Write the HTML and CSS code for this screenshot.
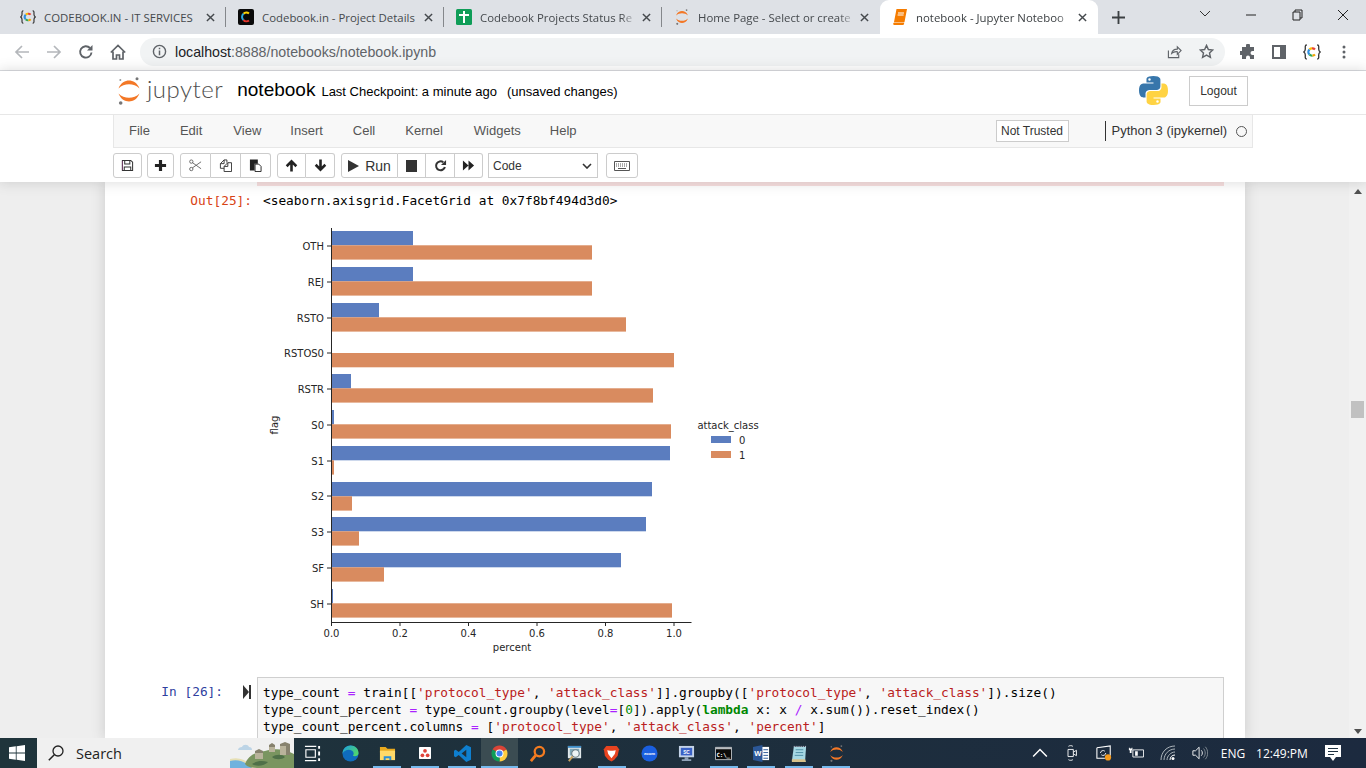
FILE: index.html
```html
<!DOCTYPE html>
<html lang="en">
<head>
<meta charset="utf-8">
<title>notebook - Jupyter Notebook</title>
<link rel="stylesheet" href="styles.css">
</head>
<body>
<svg class="defs" width="0" height="0" aria-hidden="true">
  <defs>
    <linearGradient id="edgeTop" x1="0" y1="0" x2="1" y2="0.600"><stop offset="0" stop-color="#1b9de2"/><stop offset="1" stop-color="#4fd66e"/></linearGradient>
  </defs>
  <symbol id="jlogo" viewBox="0 0 22 28">
    <path fill="#f37726" d="M0.5 11.5C3 5.5 7 3.6 11 3.6s8 1.900 10.500 7.900C18.500 8.500 15 7.300 11 7.300S3.500 8.500 0.500 11.500z"/>
    <path fill="#f37726" d="M0.500 16.500C3 22.500 7 24.400 11 24.400s8-1.900 10.500-7.900C18.500 19.500 15 20.700 11 20.700S3.500 19.500 0.500 16.500z"/>
    <circle cx="19" cy="1.800" r="1.500" fill="#767677"/>
    <circle cx="2.700" cy="26" r="1.800" fill="#767677"/>
    <circle cx="2.300" cy="3" r="1" fill="#9a9a9a"/>
  </symbol>
  <symbol id="cbrace" viewBox="0 0 18 16">
    <path fill="none" stroke="#333" stroke-width="1.300" d="M3.800 1C1.800 1 2.300 3 2.300 5S2.300 7 .8 8c1.500 1 1.500 1 1.500 3s-.5 4 1.500 4M14.200 1c2 0 1.500 2 1.500 4s0 2 1.500 3c-1.500 1-1.500 1-1.500 3s.5 4-1.500 4"/>
    <path fill="none" stroke="#ea4335" stroke-width="2.200" d="M12 5.400A3.700 3.700 0 0 0 9 4.300"/>
    <path fill="none" stroke="#fbbc05" stroke-width="2.200" d="M9 4.300A3.700 3.700 0 0 0 6.400 5.400"/>
    <path fill="none" stroke="#2f8fe0" stroke-width="2.200" d="M6.400 5.400A3.700 3.700 0 0 0 6.400 10.600"/>
    <path fill="none" stroke="#34a853" stroke-width="2.200" d="M6.400 10.600A3.700 3.700 0 0 0 9.500 11.700"/>
    <path fill="none" stroke="#f4a300" stroke-width="2.200" d="M9.500 11.700A3.700 3.700 0 0 0 12 10.600"/>
  </symbol>
  <symbol id="xmark" viewBox="0 0 10 10">
    <path stroke="#45494d" stroke-width="1.600" d="M1 1l8 8M9 1l-8 8"/>
  </symbol>
</svg>

<div class="window">
  <div class="tabstrip">
    <div class="tab tab-full">
      <svg class="fav" viewBox="0 0 18 16"><use href="#cbrace"/></svg>
      <span class="tab-title">CODEBOOK.IN - IT SERVICES</span>
      <svg class="tab-x" viewBox="0 0 10 10"><use href="#xmark"/></svg>
    </div>
    <div class="tab tab-full">
      <svg class="fav" viewBox="0 0 16 16"><rect width="16" height="16" rx="2" fill="#0a0a0a"/><path fill="none" stroke="#ffd400" stroke-width="2" d="M11 4.500A4 4 0 0 0 5.500 4.800"/><path fill="none" stroke="#29a8e0" stroke-width="2" d="M5.500 4.800A4 4 0 0 0 5.500 11"/><path fill="none" stroke="#e5352d" stroke-width="2" d="M5.500 11A4 4 0 0 0 11 11.500"/></svg>
      <span class="tab-title">Codebook.in - Project Details</span>
      <svg class="tab-x" viewBox="0 0 10 10"><use href="#xmark"/></svg>
    </div>
    <div class="tab">
      <svg class="fav" viewBox="0 0 16 16"><rect width="16" height="16" rx="1.500" fill="#0f9d58"/><path fill="#fff" d="M7 2h2v3h4v2H9v7H7V7H3V5h4z"/></svg>
      <span class="tab-title">Codebook Projects Status Re</span>
      <svg class="tab-x" viewBox="0 0 10 10"><use href="#xmark"/></svg>
    </div>
    <div class="tab tab-last">
      <svg class="fav" viewBox="0 0 22 28"><use href="#jlogo"/></svg>
      <span class="tab-title">Home Page - Select or create</span>
      <svg class="tab-x" viewBox="0 0 10 10"><use href="#xmark"/></svg>
    </div>
    <div class="tab tab-active">
      <svg class="fav fav-book" viewBox="0 0 14 16"><path fill="#f57c00" d="M3.500 0H14l-2.500 13H1zM1 13.500h10.300l-.3 1.500c-.1.600-.5 1-1.100 1H1.500C.6 16 0 15.200.2 14.400z"/><path stroke="#fff" stroke-width="1" d="M5 4h6M4.600 6h6"/></svg>
      <span class="tab-title">notebook - Jupyter Noteboo</span>
      <svg class="tab-x" viewBox="0 0 10 10"><use href="#xmark"/></svg>
    </div>
    <svg class="newtab" viewBox="0 0 14 14"><path stroke="#3c4043" stroke-width="2" d="M7 0v14M0 7h14"/></svg>
    <div class="winctl">
      <svg class="wc" viewBox="0 0 46 30"><path fill="none" stroke="#333" d="M18 11l5 5 5-5"/></svg>
      <svg class="wc" viewBox="0 0 46 30"><path stroke="#222" d="M18 15h10"/></svg>
      <svg class="wc" viewBox="0 0 46 30"><path fill="none" stroke="#222" d="M19 12h7v8h-7zM21 12v-2h7v8h-2"/></svg>
      <svg class="wc" viewBox="0 0 46 30"><path stroke="#222" d="M18 10l10 10M28 10L18 20"/></svg>
    </div>
  </div>

  <div class="navbar">
    <svg class="nav-ic" viewBox="0 0 16 16"><path fill="none" stroke="#b4b7bb" stroke-width="1.700" d="M15 8H2M8 2L2 8l6 6"/></svg>
    <svg class="nav-ic" viewBox="0 0 16 16"><path fill="none" stroke="#b4b7bb" stroke-width="1.700" d="M1 8h13M8 2l6 6-6 6"/></svg>
    <svg class="nav-ic" viewBox="0 0 16 16"><path fill="none" stroke="#5f6368" stroke-width="1.900" d="M13.500 8.500A5.700 5.700 0 1 1 12 4"/><path fill="#5f6368" d="M14.500 1v5.500H9z"/></svg>
    <svg class="nav-ic" viewBox="0 0 16 16"><path fill="none" stroke="#5f6368" stroke-width="1.700" d="M3 7.500V15h3.500v-4h3v4H13V7.500M.8 8.500L8 1.500l7.200 7"/></svg>
    <div class="omnibox">
      <svg class="omni-info" viewBox="0 0 16 16"><circle cx="8" cy="8" r="6.500" fill="none" stroke="#5f6368" stroke-width="1.500"/><path stroke="#5f6368" stroke-width="1.600" d="M8 7v5M8 4v1.700"/></svg>
      <span class="url"><span class="url-host">localhost</span>:8888/notebooks/notebook.ipynb</span>
      <svg class="omni-share" viewBox="0 0 16 16"><path fill="none" stroke="#5f6368" stroke-width="1.200" d="M1.500 7v7.500h11V11M5 10c.5-3 3-4.500 6-4.500V3l4 4-4 4V8.200C8.500 8 6.500 8.500 5 10z"/></svg>
      <svg class="omni-star" viewBox="0 0 16 16"><path fill="none" stroke="#5f6368" stroke-width="1.500" d="M8 1.500l2 4.400 4.700.5-3.500 3.200 1 4.700L8 11.900l-4.200 2.400 1-4.700L1.300 6.400 6 5.900z"/></svg>
    </div>
    <svg class="ext ext-puzzle" viewBox="0 0 16 16"><path fill="#5f6368" d="M6 1.500a2 2 0 0 1 4 0V3h4v4h-1.500a2 2 0 0 0 0 4H14v4H10v-1.500a2 2 0 0 0-4 0V15H2v-4H.500a2 2 0 0 1 0-4H2V3h4z"/></svg>
    <svg class="ext ext-panel" viewBox="0 0 16 16"><path fill="#5f6368" d="M1 1h14v14H1zM3 3v10h6V3z"/></svg>
    <svg class="ext ext-c" viewBox="0 0 18 16"><use href="#cbrace"/></svg>
    <svg class="ext ext-dots" viewBox="0 0 16 16"><circle cx="8" cy="3" r="1.500" fill="#5f6368"/><circle cx="8" cy="8" r="1.500" fill="#5f6368"/><circle cx="8" cy="13" r="1.500" fill="#5f6368"/></svg>
  </div>

  <header class="jp-head">
    <div class="jp-title">
      <a class="jp-logo">
        <svg class="jp-mark" viewBox="0 0 22 28"><use href="#jlogo"/></svg>
        <span class="jp-word">jupyter</span>
      </a>
      <span class="nb-name">notebook</span>
      <span class="nb-check">Last Checkpoint: a minute ago</span>
      <span class="nb-save">(unsaved changes)</span>
      <svg class="py-logo" viewBox="0 0 111 111">
        <path fill="#3776ab" d="M54.900 0C26.800 0 28.600 12.200 28.600 12.200v12.600h26.800v3.800H17.900S0 26.600 0 54.800s15.700 27.200 15.700 27.200h9.300V68.900s-.5-15.700 15.400-15.700h26.600s14.900.2 14.900-14.400V14.600S84.200 0 54.900 0zM40.200 8.500a4.800 4.800 0 1 1 0 9.600 4.800 4.800 0 0 1 0-9.600z"/>
        <path fill="#ffd343" transform="rotate(180 55.500 55.500)" d="M54.900 0C26.800 0 28.600 12.200 28.600 12.200v12.600h26.800v3.800H17.900S0 26.600 0 54.800s15.700 27.200 15.700 27.200h9.300V68.900s-.5-15.700 15.400-15.700h26.600s14.900.2 14.900-14.400V14.600S84.200 0 54.900 0zM40.200 8.500a4.800 4.800 0 1 1 0 9.600 4.800 4.800 0 0 1 0-9.600z"/>
      </svg>
      <button class="logout">Logout</button>
    </div>
    <nav class="menubar">
      <span class="mi mi-file">File</span>
      <span class="mi mi-edit">Edit</span>
      <span class="mi mi-view">View</span>
      <span class="mi mi-insert">Insert</span>
      <span class="mi mi-cell">Cell</span>
      <span class="mi mi-kernel">Kernel</span>
      <span class="mi mi-widgets">Widgets</span>
      <span class="mi mi-help">Help</span>
      <span class="trust">Not Trusted</span>
      <span class="kernel">Python 3 (ipykernel)</span>
      <span class="kernel-dot"></span>
    </nav>
    <div class="nb-toolbar">
      <div class="btn-group g-save"><button class="tb"><svg viewBox="0 0 14 14"><path fill="none" stroke="#333" stroke-width="1.100" d="M1.500 1.500h9l2 2v9h-11zM4 1.500v4h5.500v-4M3.500 12.500V8.500h7v4"/><path stroke="#8a3a7a" stroke-width=".7" d="M1.500 2v10"/></svg></button></div>
      <div class="btn-group g-add"><button class="tb"><svg viewBox="0 0 14 14"><path fill="#222" d="M5.300 1h3.400v4.300H13v3.400H8.700V13H5.300V8.700H1V5.300h4.300z"/></svg></button></div>
      <div class="btn-group g-edit">
        <button class="tb"><svg viewBox="0 0 14 14"><path fill="none" stroke="#666" stroke-width="1" d="M3.500 3.800L13 10.500M3.500 9.700L13 3"/><circle cx="2.500" cy="2.800" r="1.800" fill="none" stroke="#666"/><circle cx="2.500" cy="10.800" r="1.800" fill="none" stroke="#666"/></svg></button>
        <button class="tb"><svg viewBox="0 0 14 14"><path fill="none" stroke="#333" stroke-width="1" d="M5.500 1l-4 4v5h4M5.500 1v4h-4M5.500 1h3v3M9.500 4l-4 4v5.500h8V4zM9.500 4v4h-4"/></svg></button>
        <button class="tb"><svg viewBox="0 0 14 14"><path fill="#222" d="M1 .5h8.500V5H6v7.500H1z"/><path fill="#fff" stroke="#222" d="M6.500 5.500h4l2.500 2.500v5.500H6.500z"/></svg></button>
      </div>
      <div class="btn-group g-move">
        <button class="tb"><svg viewBox="0 0 14 14"><path fill="none" stroke="#222" stroke-width="2.800" d="M7 13.500V3M1.800 7.800L7 2.600l5.200 5.200"/></svg></button>
        <button class="tb"><svg viewBox="0 0 14 14"><path fill="none" stroke="#222" stroke-width="2.800" d="M7 .5V11M1.800 6.200L7 11.400l5.200-5.200"/></svg></button>
      </div>
      <div class="btn-group g-run">
        <button class="tb tb-run"><svg viewBox="0 0 11 12"><path fill="#333" d="M0 0l11 6-11 6z"/></svg><span>Run</span></button>
        <button class="tb tb-stop"><svg viewBox="0 0 11 12"><path fill="#333" d="M0 0h11v12H0z"/></svg></button>
        <button class="tb tb-re"><svg viewBox="0 0 14 14"><path fill="none" stroke="#333" stroke-width="2.200" d="M11.700 8.500A4.800 4.800 0 1 1 10 3.500"/><path fill="#333" d="M13 1v5.500H7.500z"/></svg></button>
        <button class="tb tb-ff"><svg viewBox="0 0 14 14"><path fill="#222" d="M1 1.500l6 5.500-6 5.500zM7 1.500l6 5.500-6 5.500z"/></svg></button>
      </div>
      <div class="cell-type"><span>Code</span><svg viewBox="0 0 10 6"><path fill="none" stroke="#333" stroke-width="1.600" d="M1 1l4 4 4-4"/></svg></div>
      <button class="tb tb-kb"><svg viewBox="0 0 16 10"><path fill="none" stroke="#555" d="M.5.500h15v9H.5z"/><path stroke="#555" stroke-dasharray="1 1" d="M2 3h12M2 5h12"/><path stroke="#555" d="M4 7.500h8"/></svg></button>
    </div>
  </header>

  <main class="site">
    <div class="nb-scroll">
      <div class="nb-container">
        <div class="stderr-tail"></div>
        <div class="out-row">
          <div class="prompt prompt-out">Out[25]:</div>
          <pre class="out-text">&lt;seaborn.axisgrid.FacetGrid at 0x7f8bf494d3d0&gt;</pre>
        </div>
        <svg class="chart" viewBox="0 0 560 449" width="560" height="449">
          <g class="blue">
            <rect x="74" y="15" width="82" height="14.300"/>
            <rect x="74" y="51" width="82" height="14.300"/>
            <rect x="74" y="87" width="48" height="14.300"/>
            <rect x="74" y="158" width="20" height="14.300"/>
            <rect x="74" y="194" width="3" height="14.300"/>
            <rect x="74" y="230" width="339" height="14.300"/>
            <rect x="74" y="266" width="321" height="14.300"/>
            <rect x="74" y="301" width="315" height="14.300"/>
            <rect x="74" y="337" width="290" height="14.300"/>
            <rect x="74" y="373" width="2" height="14.300"/>
          </g>
          <g class="orange">
            <rect x="74" y="29.300" width="261" height="14.300"/>
            <rect x="74" y="65.300" width="261" height="14.300"/>
            <rect x="74" y="101.300" width="295" height="14.300"/>
            <rect x="74" y="137" width="343" height="14.300"/>
            <rect x="74" y="172.300" width="322" height="14.300"/>
            <rect x="74" y="208.300" width="340" height="14.300"/>
            <rect x="74" y="244.300" width="3" height="14.300"/>
            <rect x="74" y="280.300" width="21" height="14.300"/>
            <rect x="74" y="315.300" width="28" height="14.300"/>
            <rect x="74" y="351.300" width="53" height="14.300"/>
            <rect x="74" y="387.300" width="341" height="14.300"/>
          </g>
          <path class="axis" d="M74.500 12v394.500H434.500"/>
          <path class="axis" d="M70 30h4M70 66h4M70 102h4M70 137h4M70 173h4M70 209h4M70 245h4M70 280h4M70 316h4M70 352h4M70 388h4"/>
          <path class="axis" d="M74.500 406v4M143 406v4M211.500 406v4M280 406v4M348.500 406v4M417 406v4"/>
          <g class="ylabels">
            <text x="67" y="33.500">OTH</text>
            <text x="67" y="69.500">REJ</text>
            <text x="67" y="105.500">RSTO</text>
            <text x="67" y="140.500">RSTOS0</text>
            <text x="67" y="176.500">RSTR</text>
            <text x="67" y="212.500">S0</text>
            <text x="67" y="248.500">S1</text>
            <text x="67" y="283.500">S2</text>
            <text x="67" y="319.500">S3</text>
            <text x="67" y="355.500">SF</text>
            <text x="67" y="391.500">SH</text>
          </g>
          <g class="xlabels">
            <text x="74.500" y="421">0.0</text>
            <text x="143" y="421">0.2</text>
            <text x="211.500" y="421">0.4</text>
            <text x="280" y="421">0.6</text>
            <text x="348.500" y="421">0.8</text>
            <text x="417" y="421">1.0</text>
            <text x="255" y="435">percent</text>
            <text x="471" y="213">attack_class</text>
          </g>
          <text class="flag" transform="translate(20.500 209) rotate(-90)">flag</text>
          <rect class="blue" x="454" y="220" width="20" height="7"/>
          <rect class="orange" x="454" y="235" width="20" height="7"/>
          <text class="legend-n" x="482" y="228">0</text>
          <text class="legend-n" x="482" y="243">1</text>
        </svg>
        <div class="in-row">
          <div class="prompt prompt-in">In [26]:</div>
          <svg class="marker" viewBox="0 0 8 14"><path fill="#333" d="M0 0l6 7-6 7z"/><path fill="#333" d="M6 0h2v14H6z"/></svg>
          <pre class="code"><span>type_count <i class="op">=</i> train[[<i class="st">'protocol_type'</i>, <i class="st">'attack_class'</i>]].groupby([<i class="st">'protocol_type'</i>, <i class="st">'attack_class'</i>]).size()</span>
<span>type_count_percent <i class="op">=</i> type_count.groupby(level<i class="op">=</i>[<i class="nu">0</i>]).apply(<b class="kw">lambda</b> x: x <i class="op">/</i> x.sum()).reset_index()</span>
<span>type_count_percent.columns <i class="op">=</i> [<i class="st">'protocol_type'</i>, <i class="st">'attack_class'</i>, <i class="st">'percent'</i>]</span></pre>
        </div>
      </div>
    </div>
    <div class="scrollbar">
      <svg class="sb-arrow" viewBox="0 0 8 5"><path fill="#505050" d="M4 0l4 5H0z"/></svg>
      <div class="sb-thumb"></div>
      <svg class="sb-arrow" viewBox="0 0 8 5"><path fill="#505050" d="M4 5l4-5H0z"/></svg>
    </div>
  </main>

  <footer class="taskbar">
    <div class="start"><svg viewBox="0 0 16 16"><path fill="#fff" d="M0 2.300l6.800-1V7.600H0zM7.600 1.200L16 0v7.600H7.600zM0 8.400h6.800v6.300L0 13.700zM7.600 8.400H16V16l-8.400-1.200z"/></svg></div>
    <div class="searchbox">
      <svg class="search-ic" viewBox="0 0 16 16"><circle cx="10" cy="6" r="5" fill="none" stroke="#222" stroke-width="1.300"/><path stroke="#222" stroke-width="1.500" d="M6.300 9.700L.8 15.200"/></svg>
      <span class="search-text">Search</span>
      <svg class="search-art" viewBox="0 0 64 30">
        <path fill="#bcd4e6" d="M8 12c0-2 2-3 4-3 1-3 6-3 7 0 2 0 3 1 3 3z"/>
        <path fill="#e6dfb4" d="M0 21c8-2 14 0 20 5l5 4H0z"/>
        <path fill="#6fb2de" d="M0 23c7-2 12 0 17 3l5 4H0z"/>
        <path fill="#7a9560" d="M15 26c3-8 10-12 20-13 10-3 20-2 29 3v14H30c-6 0-12 0-15-4z"/>
        <path fill="#4f7048" d="M22 26c4-3 10-4 16-2-3 4-12 5-16 2zM42 19c4-3 10-3 13 0-3 3-10 3-13 0z"/>
        <path fill="#b9b39b" d="M25 13h8v8h-8zM39 7h6v7h-6zM50 6h10v11H50z"/>
        <path fill="#87826e" d="M25 13l4-2 4 2v2h-8zM39 7l3-2 3 2v2h-6zM50 6l5-2 5 2v2H50zM56 8h4v9h-4z"/>
      </svg>
    </div>
    <div class="tasks">
      <div class="task"><svg viewBox="0 0 18 18"><path fill="none" stroke="#fff" stroke-width="1.200" d="M2 5h10v8H2zM1 1.500h12M1 16.500h12"/><path fill="#fff" d="M15 1h2v3h-2zM15 7h2v4h-2zM15 14h2v3h-2z"/></svg></div>
      <div class="task"><svg viewBox="0 0 18 18"><circle cx="9" cy="9" r="8.500" fill="#0f6cbd"/><path fill="url(#edgeTop)" d="M.5 9C.8 3.500 5 .5 9 .5c5 0 8.500 3.500 8.500 8 0 3-3.500 4-6 3 1.500-1.500 1-4-.8-5.300C7.500 4 3 5 .5 9z"/></svg></div>
      <div class="task task-on"><svg viewBox="0 0 18 18"><path fill="#e8a91e" d="M1 2h6l2 2h8v4H1z"/><path fill="#ffd968" d="M1 6h16v10H1z"/><path fill="#2a8fd6" d="M5 12h8v4h-2v-2H7v2H5z"/></svg></div>
      <div class="task task-on"><svg class="ic-small" viewBox="0 0 16 16"><rect width="16" height="16" rx="1" fill="#fff"/><circle cx="8" cy="5" r="2.500" fill="#e0453c"/><circle cx="4.500" cy="11" r="2.500" fill="#e0453c"/><circle cx="11.500" cy="11" r="2.500" fill="#e0453c"/></svg></div>
      <div class="task task-on"><svg viewBox="0 0 18 18"><path fill="#0e7fcf" d="M13 0l5 2.500v13L13 18 5 10.500 1.800 13 0 12V6l1.800-1L5 7.500zM13 5L8 9l5 4z"/></svg></div>
      <div class="task task-active"><svg viewBox="0 0 18 18"><path fill="#db4437" d="M9 9L1.640 4.750A8.500 8.500 0 0 1 16.360 4.750z"/><path fill="#ffcd40" d="M9 9L16.360 4.750A8.500 8.500 0 0 1 9 17.500z"/><path fill="#0f9d58" d="M9 9V17.500A8.500 8.500 0 0 1 1.640 4.750z"/><circle cx="9" cy="9" r="4.200" fill="#fff"/><circle cx="9" cy="9" r="3.200" fill="#4285f4"/></svg></div>
      <div class="task"><svg viewBox="0 0 18 18"><circle cx="11" cy="7" r="5" fill="none" stroke="#f47b20" stroke-width="2.400"/><path stroke="#f47b20" stroke-width="3" d="M7 11l-5 6"/></svg></div>
      <div class="task"><svg viewBox="0 0 18 18"><path fill="#dfe7ea" d="M2 1h14v13H2z"/><path fill="#3f8fc9" d="M2 1h14v2H2z"/><path fill="#7fa8b8" d="M4 4h10v7H4z"/><circle cx="10" cy="9" r="4" fill="#eef4f6" stroke="#6d7f88" stroke-width="1.200"/><path stroke="#c9a25e" stroke-width="2" d="M7 12l-4 5"/></svg></div>
      <div class="task task-on"><svg viewBox="0 0 18 18"><path fill="#e8431f" d="M3.500 1h11l1.500 2 1 1.500-1.500 7-3.500 4L9 17.500 5.500 15.500 2 11.500.9 4.500 2 3z"/><path fill="#fff" d="M4.500 5.500l3 .5h3l3-.5-1 4L9 14 5.500 9.500zM8 7h2l-1 2z"/></svg></div>
      <div class="task"><svg viewBox="0 0 18 18"><circle cx="9" cy="9" r="8.500" fill="#1a5fe0"/><text class="zoom-txt" x="9" y="10.500">zoom</text></svg></div>
      <div class="task"><svg viewBox="0 0 18 18"><path fill="#c4d3e8" d="M1 1h16v12H1z"/><path fill="#3a62c6" d="M3 3h12v8H3z"/><path fill="#8fa2b8" d="M7 13h4v2H7zM4 15h10v2H4z"/><text class="sc-txt" x="9" y="9">SC</text></svg></div>
      <div class="task task-on"><svg viewBox="0 0 18 18"><path fill="#0a0a0a" stroke="#b8bcc0" d="M.5 2.500h17v13H.5z"/><path fill="#b8bcc0" d="M.5 2.500h17v2H.5z"/><text class="cmd-txt" x="1.500" y="12.500">C:\_</text></svg></div>
      <div class="task task-on"><svg viewBox="0 0 18 18"><path fill="#fff" d="M8 2h9v14H8z"/><path stroke="#2b5797" d="M11 5h5M11 8h5M11 11h5M11 14h5"/><path fill="#2b5797" d="M0 2l10-2v18L0 16z"/><text class="word-txt" x="5" y="12">W</text></svg></div>
      <div class="task task-on"><svg viewBox="0 0 18 18"><path fill="#a6d8e4" d="M4 2h13l-1 15H2z"/><path fill="#d8c28a" d="M2 15h14l1 3H2z"/><path stroke="#4f8fa6" d="M6 5h8M6 8h8M5 11h9"/><path stroke="#dde" stroke-dasharray="1 1" d="M4 1.500h13"/></svg></div>
      <div class="task task-on"><svg viewBox="0 0 22 28"><use href="#jlogo"/></svg></div>
    </div>
    <div class="tray">
      <div class="tray-i"><svg viewBox="0 0 14 8"><path fill="none" stroke="#fff" stroke-width="1.300" d="M1 7l6-6 6 6"/></svg></div>
      <div class="tray-i"><svg viewBox="0 0 12 18"><path fill="none" stroke="#fff" d="M1.500 5h6v8h-6zM7.500 8L11 6v6l-3.500-2M2 1.500c1-1 4-1 5 0M2 16.500c1 1 4 1 5 0"/></svg></div>
      <div class="tray-i"><svg viewBox="0 0 18 18"><path fill="none" stroke="#fff" stroke-width="1.200" d="M1 3l15-2v11M1 3v12h9"/><path fill="none" stroke="#fff" d="M5 9a3 3 0 0 1 5-2M11 9a3 3 0 0 1-5 2"/><circle cx="13.500" cy="14" r="3.500" fill="#f59a1b"/></svg></div>
      <div class="tray-i"><svg viewBox="0 0 18 14"><path fill="none" stroke="#fff" d="M5.500 3.500h12v8h-12z"/><path fill="#fff" d="M1 1v3h4V1h-1v1H2V1zM2 4h2v3H2zM8 5h3v5H8z"/></svg></div>
      <div class="tray-i"><svg viewBox="0 0 16 16"><path fill="none" stroke="#aeb6bc" d="M1 15C1 7 7 1 15 1M4 15c0-6 5-11 11-11M7 15c0-4 4-8 8-8"/><path fill="none" stroke="#fff" d="M10 15c0-3 2-5 5-5"/><circle cx="13" cy="13.500" r="1.500" fill="#fff"/></svg></div>
      <div class="tray-i"><svg viewBox="0 0 18 16"><path fill="none" stroke="#fff" d="M1 5.500h3l4-4v13l-4-4H1z"/><path fill="none" stroke="#fff" d="M10.500 5c1.500 1.500 1.500 4.500 0 6"/><path fill="none" stroke="#8b949b" d="M13 3c2.500 3 2.500 7 0 10M15 1c3.500 4 3.500 10 0 14"/></svg></div>
      <span class="tray-t tray-eng">ENG</span>
      <span class="tray-t tray-time">12:49:PM</span>
      <div class="tray-i tray-note"><svg viewBox="0 0 16 16"><path fill="#fff" d="M0 0h16v12h-5l-3 4-3-4H0z"/><path stroke="#1f3241" d="M3 3.500h10M3 6.500h10M3 9.500h6"/></svg></div>
    </div>
  </footer>
</div>
</body>
</html>
```
FILE: styles.css
```css
* { box-sizing: border-box; }
html, body { margin: 0; padding: 0; height: 768px; overflow: hidden; background: #fff; }
.defs { position: absolute; }
i { font-style: normal; }

.window { display: flex; flex-direction: column; width: 1366px; height: 768px; font-family: "Liberation Sans", Arial, sans-serif; }

/* tabs */
.tabstrip { display: flex; align-items: stretch; height: 34px; background: #dee1e6; padding-left: 8px; flex: none; }
.tab { position: relative; display: flex; align-items: center; width: 218px; padding: 0 9px 0 12px; font: 11.400px "Open Sans", sans-serif; color: #45494d; }
.tab::after { content: ""; position: absolute; right: 0; top: 7px; height: 20px; width: 1px; background: #84878b; }
.tab-last::after, .tab-active::after { display: none; }
.fav { width: 16px; height: 16px; flex: none; margin-right: 8px; }
.fav-book { width: 14px; margin-left: 1px; margin-right: 9px; }
.tab-title { flex: 1; min-width: 0; overflow: hidden; white-space: nowrap; -webkit-mask-image: linear-gradient(to left, transparent 0, #000 16px); mask-image: linear-gradient(to left, transparent 0, #000 16px); }
.tab-full .tab-title { -webkit-mask-image: none; mask-image: none; }
.tab-x { width: 9px; height: 9px; flex: none; margin-left: 5px; margin-right: 2px; }
.tab-active { background: #fff; border-radius: 9px 9px 0 0; color: #3c4043; }
.newtab { width: 13px; height: 13px; align-self: center; margin-left: 14px; flex: none; }
.winctl { display: flex; margin-left: auto; height: 30px; margin-right: 0; }
.wc { width: 46px; height: 30px; }

/* nav */
.navbar { display: flex; align-items: center; height: 37px; flex: none; background: #fff; border-bottom: 1px solid #dadce0; padding: 0 0 1px 14px; }
.nav-ic { width: 16px; height: 16px; margin-right: 16px; flex: none; }
.omnibox { display: flex; align-items: center; width: 1085px; height: 28px; margin-left: -2px; background: #f1f3f4; border-radius: 14px; padding: 0 11px 0 12px; flex: none; }
.omni-info { width: 15px; height: 15px; margin-right: 8px; flex: none; }
.url { flex: 1; font: 14.200px "Liberation Sans", sans-serif; color: #5f6368; white-space: nowrap; }
.url-host { color: #202124; }
.omni-share { width: 15px; height: 15px; margin-right: 17px; }
.omni-star { width: 15px; height: 15px; }
.ext { height: 16px; width: 16px; flex: none; }
.ext-puzzle { margin-left: 15px; }
.ext-panel { margin-left: 15px; }
.ext-c { margin-left: 15px; width: 20px; }
.ext-dots { margin-left: 14px; }

/* jupyter head */
.jp-head { position: relative; z-index: 3; height: 111px; flex: none; background: #fff; box-shadow: 0 0 12px 1px rgba(87, 87, 87, .2); }
.jp-title { display: flex; align-items: center; height: 44px; padding: 0 118px 4px 118px; border-bottom: 1px solid #e7e7e7; color: #000; }
.jp-logo { display: flex; align-items: center; }
.jp-mark { width: 22px; height: 28px; margin-right: 7px; }
.jp-word { font: 300 24px Lato, sans-serif; color: #4e4e4e; letter-spacing: .5px; position: relative; top: -2px; }
.nb-name { margin-left: 14px; font-size: 19px; position: relative; top: -1px; }
.nb-check { margin-left: 6px; font-size: 13px; position: relative; top: 1px; }
.nb-save { margin-left: 10px; font-size: 13px; position: relative; top: 1px; }
.py-logo { width: 29px; height: 29px; margin-left: auto; }
.logout { width: 59px; height: 30px; margin-left: 21px; padding: 0; background: #fff; border: 1px solid #ccc; font: 12px "Liberation Sans", sans-serif; color: #333; }

.menubar { display: flex; align-items: center; width: 1140px; height: 33px; margin-left: 113px; background: #f8f8f8; border: 1px solid #e7e7e7; border-top: 0; font-size: 13px; color: #555; }
.mi { display: block; margin-bottom: 2px; }
.mi-file { margin-left: 15px; }
.mi-edit { margin-left: 30px; }
.mi-view { margin-left: 31px; }
.mi-insert { margin-left: 29px; }
.mi-cell { margin-left: 30px; }
.mi-kernel { margin-left: 30px; }
.mi-widgets { margin-left: 31px; }
.mi-help { margin-left: 29px; }
.trust { margin-left: 419px; width: 73px; height: 22px; display: flex; align-items: center; justify-content: center; background: #fff; border: 1px solid #ccc; font-size: 12px; color: #333; }
.kernel { margin-left: 36px; padding-left: 6px; border-left: 1px solid #333; line-height: 20px; color: #333; font-size: 13px; }
.kernel-dot { width: 11px; height: 11px; margin-left: 9px; border: 1.500px solid #555; border-radius: 50%; }

.nb-toolbar { display: flex; align-items: center; height: 34px; padding: 5px 0 4px 113px; }
.btn-group { display: flex; height: 25px; }
.tb { display: flex; align-items: center; justify-content: center; padding: 0; height: 25px; width: 29px; background: #fff; border: 1px solid #ccc; border-left-width: 0; border-radius: 0; color: #333; font: 14px "Liberation Sans", sans-serif; }
.tb:first-child { border-left-width: 1px; border-radius: 3px 0 0 3px; }
.tb:last-child { border-radius: 0 3px 3px 0; }
.tb:only-child { border-radius: 3px; }
.tb svg { width: 13px; height: 13px; }
.g-save .tb { width: 29px; }
.g-add { margin-left: 5px; }
.g-add .tb { width: 27px; }
.g-edit { margin-left: 6px; }
.g-edit .tb { width: 30px; }
.g-edit .tb:first-child { width: 31px; }
.g-move { margin-left: 6px; }
.g-move .tb { width: 29px; }
.g-run { margin-left: 6px; }
.tb-run { width: 57px; gap: 6px; }
.tb-run svg, .tb-stop svg { width: 11px; height: 12px; }
.tb-stop { width: 28px; }
.tb-re { width: 29px; }
.tb-ff { width: 28px; }
.cell-type { display: flex; align-items: center; justify-content: space-between; width: 110px; height: 25px; margin-left: 5px; padding: 0 5px 0 4px; background: #fff; border: 1px solid #ccc; font-size: 12px; color: #333; }
.cell-type svg { width: 10px; height: 6px; }
.tb.tb-kb { width: 32px; margin-left: 8px; border-left-width: 1px; border-radius: 3px; }
.tb-kb svg { width: 16px; height: 10px; }

/* notebook */
.site { position: relative; display: flex; flex: 1; min-height: 0; background: #eee; overflow: hidden; }
.nb-scroll { flex: 1; min-width: 0; padding-left: 105px; overflow: hidden; }
.nb-container { width: 1140px; height: 100%; background: #fff; box-shadow: 0 0 12px 1px rgba(87, 87, 87, .2); overflow: hidden; }
.stderr-tail { width: 967px; height: 4px; margin-left: 152px; background: #f7dede; }
.out-row { display: flex; align-items: center; height: 17px; margin-top: 6px; }
.prompt, .out-text, .code { font: 12.800px/17px "DejaVu Sans Mono", monospace; }
.prompt-out { width: 147px; text-align: right; color: #d84315; }
.prompt-in { width: 118px; text-align: right; color: #303f9f; flex: none; padding-top: 6px; }
.out-text { margin: 0 0 0 11px; color: #000; }
.chart { display: block; margin: 7px 0 0 152px; }
.blue { fill: #5b7dbf; }
.orange { fill: #d98b5f; }
.axis { fill: none; stroke: #262626; stroke-width: 1; }
.ylabels text, .xlabels text, .flag, .legend-n { font: 10px "DejaVu Sans", sans-serif; fill: #262626; }
.ylabels text { text-anchor: end; }
.xlabels text { text-anchor: middle; }
.flag { text-anchor: middle; }
.in-row { display: flex; align-items: flex-start; margin-top: 12px; }
.marker { width: 8px; height: 14px; margin: 8px 6px 0 20px; flex: none; }
.code { width: 967px; height: 100px; margin: 0; padding: 6px 5px; background: #f7f7f7; border: 1px solid #cfcfcf; color: #000; flex: none; }
.op { color: #a2f; }
.st { color: #ba2121; }
.nu { color: #080; }
.kw { color: #080; font-weight: 700; }

.scrollbar { display: flex; flex-direction: column; align-items: center; width: 17px; background: #f1f1f1; flex: none; position: relative; z-index: 1; padding: 7px 0 4px; }
.sb-arrow { width: 8px; height: 5px; flex: none; }
.sb-thumb { width: 13px; height: 17px; margin-top: 207px; margin-bottom: auto; background: #c1c1c1; }

/* taskbar */
.taskbar { display: flex; align-items: stretch; height: 30px; flex: none; background: linear-gradient(to right, #1f343b, #1c2a3f); position: relative; z-index: 4; color: #fff; }
.start { display: flex; align-items: center; justify-content: center; width: 37px; flex: none; padding-right: 3px; }
.start svg { width: 16px; height: 16px; }
.searchbox { display: flex; align-items: center; width: 257px; flex: none; padding-left: 11px; background: #f0f0f0; overflow: hidden; }
.search-ic { width: 16px; height: 16px; margin-right: 12px; flex: none; }
.search-text { font: 14.500px "Open Sans", sans-serif; color: #222; }
.search-art { width: 64px; height: 30px; margin-left: auto; flex: none; }
.tasks { display: flex; flex: none; }
.task { position: relative; display: flex; align-items: center; justify-content: center; width: 37.400px; }
.task svg { width: 17px; height: 17px; }
.task svg.ic-small { width: 12px; height: 12px; }
.task-on::after, .task-active::after { content: ""; position: absolute; left: 4.700px; right: 4.700px; bottom: 0; height: 2px; background: #76b9ed; }
.task-active { background: #3b4c52; }
.task-active::after { left: 0; right: 0; }
.zoom-txt { font: 700 4.500px "Liberation Sans", sans-serif; fill: #fff; text-anchor: middle; }
.sc-txt { font: 700 5px "Liberation Sans", sans-serif; fill: #fff; text-anchor: middle; }
.cmd-txt { font: 700 6px "DejaVu Sans Mono", monospace; fill: #fff; }
.word-txt { font: 700 8px "Liberation Sans", sans-serif; fill: #fff; text-anchor: middle; }
.tray { display: flex; align-items: center; margin-left: auto; padding-right: 14px; }
.tray-i { display: flex; align-items: center; justify-content: center; width: 32px; height: 100%; }
.tray-i svg { width: 16px; height: 16px; }
.tray-t { font: 12px "Open Sans", sans-serif; color: #fff; text-align: center; }
.tray-eng { width: 34px; }
.tray-time { width: 64px; }
.tray-i.tray-note { width: 38px; }
```
